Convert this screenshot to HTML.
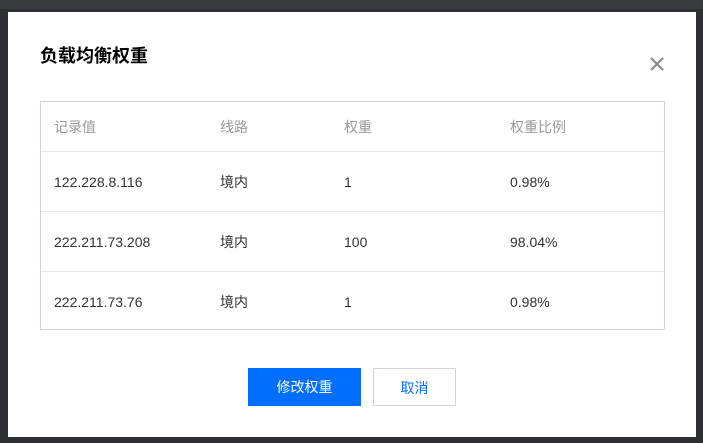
<!DOCTYPE html>
<html><head><meta charset="utf-8"><style>
html,body{margin:0;padding:0;}
body{width:703px;height:443px;background:#2f3033;position:relative;overflow:hidden;font-family:"Liberation Sans","Noto Sans CJK SC",sans-serif;}
.top{position:absolute;left:0;top:0;width:703px;height:9px;background:#3a3b3e;}
.dlg{position:absolute;left:8px;top:12px;width:688px;height:425px;background:#fff;}
.title{position:absolute;left:32px;top:32px;font-size:18px;font-weight:bold;color:#000;line-height:24px;}
.close{position:absolute;left:642px;top:45px;}
.tbl{position:absolute;left:32px;top:89px;width:623px;height:227px;border:1px solid #cfd5de;}
.row{position:absolute;left:0;width:623px;height:59px;border-top:1px solid #e5e8ed;font-size:14px;color:#333;}
.row.h{border-top:none;height:49px;color:#999;border-bottom:1px solid #cfd5de;}
.row span{position:absolute;top:50%;transform:translateY(-50%);}
.c1{left:13px}.c2{left:179px}.c3{left:303px}.c4{left:469px}
.btn{position:absolute;top:356px;height:38px;line-height:38px;text-align:center;font-size:14px;box-sizing:border-box;}
.p{left:240px;width:113px;background:#006eff;color:#fff;}
.s{left:365px;width:83px;border:1px solid #cfd5de;color:#006eff;background:#fff;}
</style></head><body>
<div class="top"></div>
<div class="dlg">
<div class="title">负载均衡权重</div>
<svg class="close" width="14" height="14" viewBox="0 0 14 14"><path d="M1 1L13 13M13 1L1 13" stroke="#888" stroke-width="2"/></svg>
<div class="tbl">
<div class="row h" style="top:0"><span class="c1">记录值</span><span class="c2">线路</span><span class="c3">权重</span><span class="c4">权重比例</span></div>
<div class="row" style="top:49px"><span class="c1">122.228.8.116</span><span class="c2">境内</span><span class="c3">1</span><span class="c4">0.98%</span></div>
<div class="row" style="top:109px"><span class="c1">222.211.73.208</span><span class="c2">境内</span><span class="c3">100</span><span class="c4">98.04%</span></div>
<div class="row" style="top:169px"><span class="c1">222.211.73.76</span><span class="c2">境内</span><span class="c3">1</span><span class="c4">0.98%</span></div>
</div>
<div class="btn p">修改权重</div>
<div class="btn s">取消</div>
</div>
</body></html>
